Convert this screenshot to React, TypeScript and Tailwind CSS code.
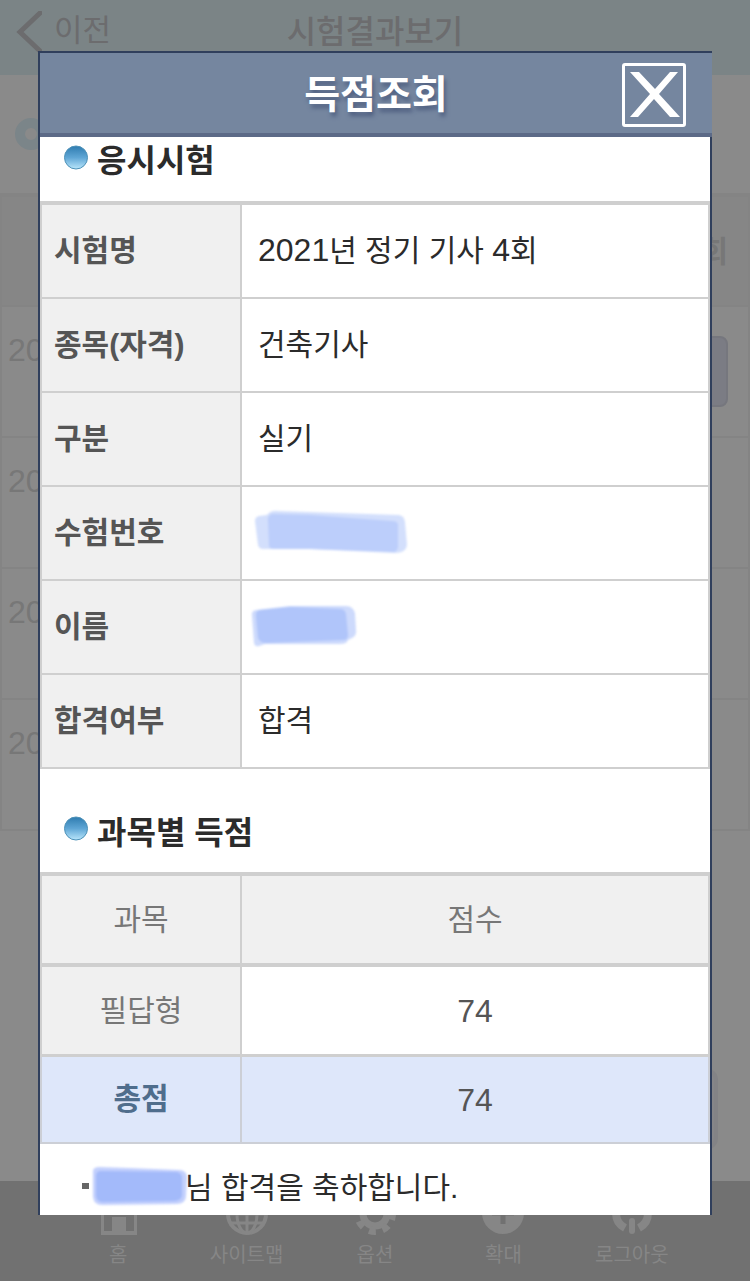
import type { ReactNode } from "react";

interface InfoRow {
  label: string;
  value: ReactNode;
}

interface NavItem {
  label: string;
  icon: ReactNode;
}

const infoRows: InfoRow[] = [
  {
    label: "시험명",
    value: (
      <>
        <span className="text-[32px]">2021</span>년 정기 기사 <span className="text-[32px]">4</span>회
      </>
    ),
  },
  { label: "종목(자격)", value: "건축기사" },
  { label: "구분", value: "실기" },
  { label: "수험번호", value: <NumberMask /> },
  { label: "이름", value: <NameMask /> },
  { label: "합격여부", value: "합격" },
];

const navItems: NavItem[] = [
  {
    label: "홈",
    icon: (
      <path
        d="M23 2 L44 20 H41 V44 H5 V20 H2 Z M8 20 V40 H16 V26 H30 V40 H38 V20 Z"
        fillRule="evenodd"
        fill="currentColor"
      />
    ),
  },
  {
    label: "사이트맵",
    icon: (
      <g fill="none" stroke="currentColor" strokeWidth="3">
        <circle cx="22" cy="23" r="19" strokeWidth="4" />
        <ellipse cx="22" cy="23" rx="10" ry="19" />
        <path d="M22 4 V42 M3 23 H41 M6 32 H38 M6 14 H38" />
      </g>
    ),
  },
  {
    label: "옵션",
    icon: (
      <g fill="none" stroke="currentColor">
        <circle cx="22" cy="23" r="12" strokeWidth="7" />
        <circle cx="22" cy="23" r="17" strokeWidth="8" strokeDasharray="6.675 6.675" strokeDashoffset="1" />
      </g>
    ),
  },
  {
    label: "확대",
    icon: (
      <>
        <circle cx="22" cy="22" r="21" fill="currentColor" />
        <path d="M22 11 V33 M11 22 H33" stroke="#717171" strokeWidth="5" />
      </>
    ),
  },
  {
    label: "로그아웃",
    icon: (
      <g fill="none" stroke="currentColor">
        <path d="M15 37 A17 17 0 0 1 15 7 M29 37 A17 17 0 0 0 29 7" strokeWidth="8" />
        <path d="M22 30 V40" strokeWidth="6" strokeLinecap="round" />
      </g>
    ),
  },
];

export default function App() {
  return (
    <div className="relative min-h-screen overflow-hidden bg-[#8a8a8a] font-['Liberation_Sans','Noto_Sans_CJK_KR',sans-serif]">
      <ResultsPage />
      <ScoreDialog />
    </div>
  );
}

// Dimmed page behind the dialog
function ResultsPage() {
  return (
    <div className="flex min-h-screen flex-col">
      <header className="grid h-[75px] grid-cols-3 bg-[#7b8486] pb-3 text-[#6c6c6e]">
        <button type="button" className="flex items-center gap-3 pl-4 text-[31px]">
          <svg width="26" height="42" viewBox="0 0 26 42" fill="none" stroke="currentColor" strokeWidth="5">
            <path d="M24 2 L4 21 L24 40" strokeLinecap="round" />
          </svg>
          이전
        </button>
        <h1 className="flex items-center justify-center text-[32px] font-medium whitespace-nowrap">시험결과보기</h1>
      </header>

      <div className="flex h-[118px] items-center px-[15px]">
        <svg width="32" height="32" viewBox="0 0 32 32">
          <circle cx="16" cy="16" r="11" fill="none" stroke="#7b8589" strokeWidth="10" />
        </svg>
      </div>

      <table className="w-full border-separate border-spacing-0 border-2 border-t-4 border-[#848484] text-[30px] text-[#777777]">
        <thead>
          <tr>
            <th className="h-[108px] bg-[#868686]" />
            <th className="bg-[#868686] pr-5 text-right font-bold">회</th>
          </tr>
        </thead>
        <tbody>
          {[0, 1, 2, 3].map((row) => (
            <tr key={row}>
              <td className="h-[131px] border-t-2 border-[#848484] pb-11 pl-[6px] text-[32px]">20</td>
              <td className="border-t-2 border-[#848484] pr-5">
                {row === 0 && (
                  <button
                    type="button"
                    aria-label="득점조회"
                    className="ml-auto block h-[71px] w-24 rounded-lg border-2 border-[#76777e] bg-[#7b7c84]"
                  />
                )}
              </td>
            </tr>
          ))}
        </tbody>
      </table>

      <div className="mt-auto flex justify-end px-8 pb-[31px]">
        <button type="button" aria-label="확인" className="h-[82px] w-40 rounded-xl border-4 border-[#838386] bg-[#868689]" />
      </div>

      <nav className="flex h-[100px] items-end justify-center bg-[#717171] px-[54px] pb-[10px] text-[#868686]">
        {navItems.map((item) => (
          <a key={item.label} href="#" className="flex flex-1 flex-col items-center text-xl whitespace-nowrap">
            <svg width="44" height="44" viewBox="0 0 44 44">
              {item.icon}
            </svg>
            <span className="mt-1 leading-8">{item.label}</span>
          </a>
        ))}
      </nav>
    </div>
  );
}

function ScoreDialog() {
  return (
    <section
      role="dialog"
      aria-labelledby="dialog-title"
      className="absolute inset-x-[38px] top-[51px] border-t-2 border-l-2 border-[#303f5c]"
    >
      <header className="grid h-[84px] grid-cols-[1fr_auto_1fr] items-center border-b-4 border-[#5c6a87] bg-[#75869f] pt-1">
        <h2
          id="dialog-title"
          className="col-start-2 text-[39px] font-bold text-white [text-shadow:2px_4px_4px_#4f5f80]"
        >
          득점조회
        </h2>
        <button type="button" aria-label="닫기" className="mr-[26px] justify-self-end">
          <svg width="64" height="64" viewBox="0 0 64 64">
            <rect x="1.5" y="1.5" width="61" height="61" rx="1.5" fill="none" stroke="white" strokeWidth="3" />
            <path d="M8 9 H17 L33 26 L48 9 H56 L37 31 L58 54 H48 L32 36 L16 54 H8 L28 31 Z" fill="white" />
          </svg>
        </button>
      </header>

      <div className="border-r-2 border-[#303f5c] bg-white">
        <SectionTitle className="h-16 pb-4">응시시험</SectionTitle>
        <table className="w-full border-separate border-spacing-0 border-t-4 border-[#cfcfcf] text-[30px]">
          <tbody>
            {infoRows.map((row) => (
              <tr key={row.label}>
                <th
                  scope="row"
                  className="h-[94px] w-[202px] border-x-2 border-b-2 border-[#cfcfcf] bg-[#f0f0f0] pb-[2px] pl-3 text-left font-bold whitespace-nowrap text-[#555555]"
                >
                  {row.label}
                </th>
                <td className="border-r-2 border-b-2 border-[#cfcfcf] pb-[2px] pl-4 text-[#2b2b2b]">{row.value}</td>
              </tr>
            ))}
          </tbody>
        </table>

        <SectionTitle className="h-[103px] pt-6">과목별 득점</SectionTitle>
        <table className="w-full border-separate border-spacing-0 border-t-4 border-[#cfcfcf] text-center text-[30px] text-[#777777]">
          <thead>
            <tr className="bg-[#f0f0f0]">
              <th scope="col" className="h-[91px] w-[202px] border-x-2 border-b-4 border-[#cfcfcf] font-normal">
                과목
              </th>
              <th scope="col" className="border-r-2 border-b-4 border-[#cfcfcf] font-normal">
                점수
              </th>
            </tr>
          </thead>
          <tbody>
            <tr>
              <th scope="row" className="h-[90px] border-x-2 border-b-3 border-[#cfcfcf] bg-[#f0f0f0] font-normal">
                필답형
              </th>
              <td className="border-r-2 border-b-3 border-[#cfcfcf] text-[32px] text-[#555555]">74</td>
            </tr>
            <tr className="bg-[#dee7fa]">
              <th scope="row" className="h-[87px] border-x-2 border-b-2 border-[#cccfd6] pb-[2px] font-bold text-[#4f6d8c]">
                총점
              </th>
              <td className="border-r-2 border-b-2 border-[#cccfd6] text-[32px] text-[#555555]">74</td>
            </tr>
          </tbody>
        </table>

        <p className="flex h-[71px] items-center pt-4 pl-[42px] text-[30px] text-[#2b2b2b]">
          <span className="mb-1 h-[6px] w-[7px] bg-[#666666]" />
          <MessageMask />
          <span className="-ml-1">님 합격을 축하합니다.</span>
        </p>
      </div>
    </section>
  );
}

function SectionTitle({ className, children }: { className: string; children: ReactNode }) {
  return (
    <h3 className={`flex items-center gap-2 pl-6 text-[32px] font-bold text-[#2b2b2b] ${className}`}>
      <svg width="25" height="25" viewBox="0 0 25 25" className="mb-2">
        <defs>
          <linearGradient id="bullet" x1="0" y1="0" x2="0" y2="1">
            <stop offset="0" stopColor="#2f7cb0" />
            <stop offset="0.5" stopColor="#5fa6d5" />
            <stop offset="1" stopColor="#b9e6fb" />
          </linearGradient>
        </defs>
        <circle cx="12" cy="12.5" r="11.5" fill="url(#bullet)" stroke="#4f92b8" strokeWidth="1" />
      </svg>
      {children}
    </h3>
  );
}

// Marker strokes over the private values
function NumberMask() {
  return (
    <svg width="158" height="50" viewBox="0 0 158 50" className="-ml-2 blur-[1px]">
      <path d="M9 9 Q5 10 5 14 L8 38 Q9 42 13 42 L60 42 L145 46 Q156 46 157 38 L155 15 Q154 8 148 8 L28 4 Q21 3 17 8 Z" fill="#d3dffc" />
      <path d="M22 7 Q17 9 18 14 L19 38 Q19 42 24 42 L60 42 L143 45 Q147 45 148 40 L148 18 Q148 14 142 14 L60 8 Z" fill="#bccefb" />
    </svg>
  );
}

function NameMask() {
  return (
    <svg width="108" height="46" viewBox="0 0 108 46" className="-ml-2 blur-[1px]">
      <path d="M6 7 Q1 8 2 13 L4 40 Q5 44 9 43 L15 41 L90 41 Q97 41 98 37 L102 35 Q107 32 106 27 L105 10 Q103 3 96 3 L40 3 Z" fill="#cddafc" />
      <path d="M10 7 Q5 8 6 14 L8 35 Q10 40 16 40 L93 37 Q98 37 98 32 L96 11 Q95 6 90 6 L40 4 Z" fill="#b0c5fa" />
    </svg>
  );
}

function MessageMask() {
  return (
    <svg width="100" height="44" viewBox="0 0 100 44" className="relative mb-1 blur-[1px]">
      <path d="M10 3 Q3 3 4 9 L4 33 Q5 41 13 41 L88 40 Q97 39 97 32 L98 14 Q98 6 90 6 L40 4 Z" fill="#c3d0fd" />
      <path d="M12 7 Q7 7 7 12 L7 32 Q8 38 14 38 L86 37 Q93 36 93 31 L93 13 Q92 8 86 8 Z" fill="#a3bafa" />
    </svg>
  );
}
